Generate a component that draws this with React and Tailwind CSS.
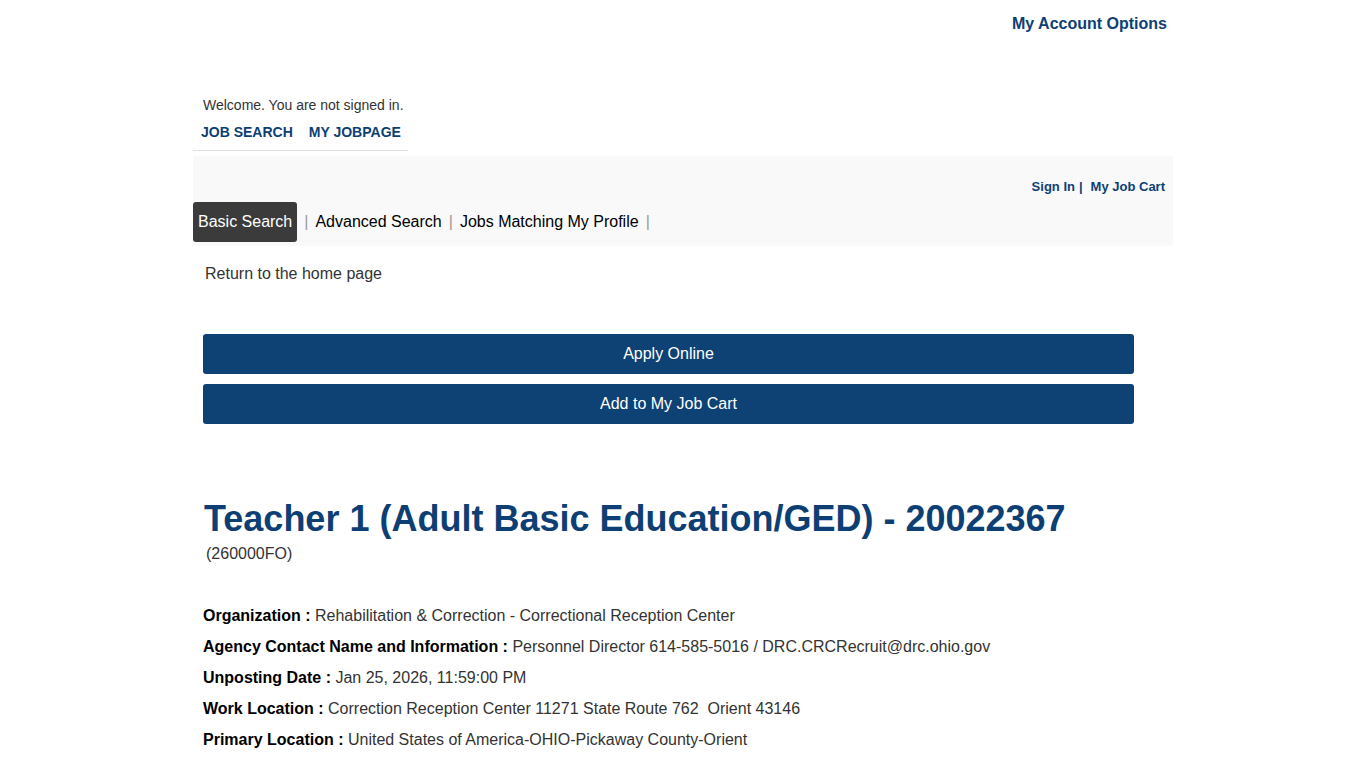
export default function App() {
  const fields = [
    ['Organization', 'Rehabilitation & Correction - Correctional Reception Center'],
    ['Agency Contact Name and Information', 'Personnel Director 614-585-5016 / DRC.CRCRecruit@drc.ohio.gov'],
    ['Unposting Date', 'Jan 25, 2026, 11:59:00 PM'],
    ['Work Location', 'Correction Reception Center 11271 State Route 762  Orient 43146'],
    ['Primary Location', 'United States of America-OHIO-Pickaway County-Orient'],
  ]

  return (
    <div className="min-h-screen bg-white font-['Liberation_Sans',Arial,sans-serif] text-[#333]">
      <div className="w-[980px] mx-auto">
        {/* Account options */}
        <div className="flex justify-end pr-[6px] pt-[14px] h-[95px]">
          <a className="text-[16px] font-bold text-[#0e3f74] leading-[20px]">My Account Options</a>
        </div>

        {/* Welcome + main nav */}
        <div className="w-[215px] border-b border-[#e0e0e0] pb-[10px]">
          <div className="pl-[10px] text-[14px] leading-[20px] text-[#333]">Welcome. You are not signed in.</div>
          <div className="flex gap-[16px] pl-[8px] mt-[9px] text-[14px] font-bold uppercase text-[#0e3f74] leading-[16px]">
            <a>Job Search</a>
            <a>My Jobpage</a>
          </div>
        </div>

        {/* Search tabs bar */}
        <div className="mt-[5px] bg-[#f9f9f9] h-[90px] flex flex-col">
          <div className="flex justify-end items-center pr-[8px] pt-[23px] text-[13px] font-bold text-[#0e3f74] leading-[16px]">
            <a>Sign In</a>
            <span className="ml-[4px] mr-[8px] text-[#0e3f74]">|</span>
            <a>My Job Cart</a>
          </div>
          <div className="flex items-center mt-[7px] text-[16px] text-black">
            <span className="bg-[#3b3b3b] text-white rounded-[3px] h-[40px] px-[5px] flex items-center">Basic Search</span>
            <span className="mx-[7px] text-[#999]">|</span>
            <span>Advanced Search</span>
            <span className="mx-[7px] text-[#999]">|</span>
            <span>Jobs Matching My Profile</span>
            <span className="mx-[7px] text-[#999]">|</span>
          </div>
        </div>

        {/* Return link */}
        <div className="pl-[12px] mt-[18px] text-[16px] leading-[20px] text-[#333]">Return to the home page</div>

        {/* Action buttons */}
        <div className="pl-[10px] w-[941px] mt-[50px] flex flex-col gap-[10px]">
          <button className="h-[40px] w-full bg-[#0e4174] text-white text-[16px] rounded-[3px]">Apply Online</button>
          <button className="h-[40px] w-full bg-[#0e4174] text-white text-[16px] rounded-[3px]">Add to My Job Cart</button>
        </div>

        {/* Title */}
        <h1 className="pl-[11px] mt-[73px] text-[36px] font-bold text-[#0e3f74] leading-[44px]">
          Teacher 1 (Adult Basic Education/GED) - 20022367
        </h1>
        <div className="pl-[13px] mt-[3px] text-[16px] leading-[20px] text-[#333]">(260000FO)</div>

        {/* Details */}
        <div className="pl-[10px] mt-[36px] flex flex-col">
          {fields.map(([label, value]) => (
            <div key={label} className="text-[16px] leading-[31px] whitespace-pre">
              <span className="font-bold text-black">{label} : </span>
              <span className="text-[#333]">{value}</span>
            </div>
          ))}
        </div>
      </div>
    </div>
  )
}
